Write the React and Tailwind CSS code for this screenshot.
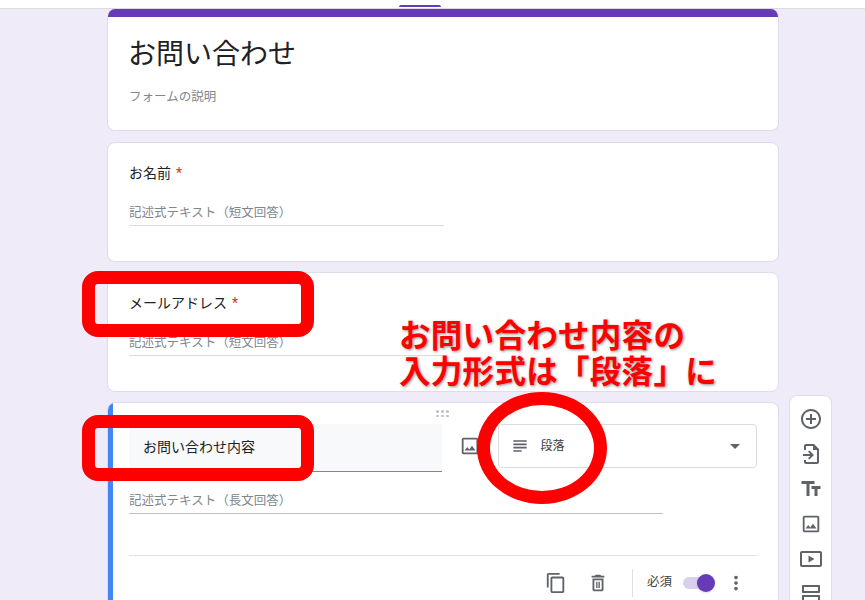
const JP = `font-['Roboto','Noto_Sans_CJK_JP',sans-serif]`;

function Ic({ d, className = "w-6 h-6", fill = "#5f6368" }) {
  return (
    <svg viewBox="0 0 24 24" className={className} fill={fill}>
      <path d={d} />
    </svg>
  );
}

const P = {
  add: "M13 7h-2v4H7v2h4v4h2v-4h4v-2h-4V7zm-1-5C6.48 2 2 6.48 2 12s4.48 10 10 10 10-4.48 10-10S17.52 2 12 2zm0 18c-4.41 0-8-3.59-8-8s3.59-8 8-8 8 3.59 8 8-3.59 8-8 8z",
  imp: "M7 2h8l5 5v13c0 1.1-.9 2-2 2H7c-1.1 0-2-.9-2-2v-2h2v2h11V8h-4V4H7v4H5V4c0-1.1.9-2 2-2zM4 12h7.2L9 9.8l1.4-1.4L15 13l-4.6 4.6L9 16.2l2.2-2.2H4v-2z",
  tt: "M2.5 4v3h5v12h3V7h5V4h-13zm19 5h-9v3h3v7h3v-7h3V9z",
  img: "M19 5v14H5V5h14m0-2H5c-1.1 0-2 .9-2 2v14c0 1.1.9 2 2 2h14c1.1 0 2-.9 2-2V5c0-1.1-.9-2-2-2zm-4.86 8.86l-3 3.87L9 13.14 6 17h12l-3.86-5.14z",
  vid: "M21 4H3c-1.1 0-2 .9-2 2v12c0 1.1.9 2 2 2h18c1.1 0 2-.9 2-2V6c0-1.1-.9-2-2-2zm0 14H3V6h18v12zM9.5 8.5v7l6-3.5-6-3.5z",
  sec: "M4 3h16c.6 0 1 .4 1 1v6c0 .6-.4 1-1 1H4c-.6 0-1-.4-1-1V4c0-.6.4-1 1-1zm1 2v4h14V5H5zM4 13h16c.6 0 1 .4 1 1v6c0 .6-.4 1-1 1H4c-.6 0-1-.4-1-1v-6c0-.6.4-1 1-1zm1 2v4h14v-4H5z",
  copy: "M16 1H4c-1.1 0-2 .9-2 2v14h2V3h12V1zm3 4H8c-1.1 0-2 .9-2 2v14c0 1.1.9 2 2 2h11c1.1 0 2-.9 2-2V7c0-1.1-.9-2-2-2zm0 16H8V7h11v14z",
  del: "M6 19c0 1.1.9 2 2 2h8c1.1 0 2-.9 2-2V7H6v12zM8 9h8v10H8V9zm7.5-5l-1-1h-5l-1 1H5v2h14V4zM10 10.5h1.5v7H10v-7zm2.5 0H14v7h-1.5v-7z",
  more: "M12 8c1.1 0 2-.9 2-2s-.9-2-2-2-2 .9-2 2 .9 2 2 2zm0 2c-1.1 0-2 .9-2 2s.9 2 2 2 2-.9 2-2-.9-2-2-2zm0 6c-1.1 0-2 .9-2 2s.9 2 2 2 2-.9 2-2-.9-2-2-2z",
  para: "M14 17H4v2h10v-2zm6-8H4v2h16V9zM4 15h16v-2H4v2zM4 5v2h16V5H4z",
};

function ShortCard({ title }) {
  return (
    <section className="h-[120px] bg-white rounded-lg border border-[#dfdbe9] pl-[21px] pt-[19px]">
      <div className="flex items-center h-[22px] text-[14px] text-[#202124]">
        {title}
        <span className="text-[#d93025] ml-[5px]">*</span>
      </div>
      <div className="mt-[9px] w-[315px] h-[33px] border-b border-[#dadce0] text-[12.5px] leading-[24px] text-[#80868b] pt-[8px]">
        記述式テキスト（短文回答）
      </div>
    </section>
  );
}

export default function App() {
  return (
    <div className={`relative w-[865px] h-[600px] overflow-hidden bg-[#f0ebf8] ${JP}`}>
      <header className="h-[9px] bg-white border-b border-[#dadce0] flex justify-center">
        <div className="w-[42px] h-[2px] mt-[5px] mr-[25px] bg-[#673ab7] rounded-t" />
      </header>

      <div className="flex items-start gap-[10px] ml-[107px]">
        <main className="w-[672px] flex flex-col gap-[10px] shrink-0">
          <section className="h-[122px] mb-[1px] bg-white rounded-lg border border-[#dfdbe9] border-t-0 overflow-hidden">
            <div className="h-[8px] bg-[#673ab7] -mx-px" />
            <h1 className="ml-[20px] mt-[13px] text-[28px] leading-[50px] text-[#202124] font-normal">お問い合わせ</h1>
            <p className="ml-[21px] mt-[5px] text-[12.5px] leading-[24px] text-[#80868b]">フォームの説明</p>
          </section>

          <ShortCard title="お名前" />
          <ShortCard title="メールアドレス" />

          <section className="relative h-[260px] bg-white rounded-lg border border-[#dfdbe9] pl-[21px] pr-[21px] overflow-hidden">
            <div className="absolute left-0 top-0 bottom-0 w-[5px] bg-[#4285f4]" />
            <div className="flex justify-center h-[21px] pt-[7px] ml-[-1px]">
              <div className="grid grid-cols-3 gap-[2px] h-[6px] w-[13px]">
                {[0, 1, 2, 3, 4, 5].map((i) => (
                  <span key={i} className="w-[3px] h-[2.5px] bg-[#bdc1c6] rounded-full" />
                ))}
              </div>
            </div>
            <div className="flex items-start">
              <div className="w-[314px] h-[48px] bg-[#f8f9fa] border-b border-[#80868b] pl-[14px] text-[14px] leading-[46px] text-[#202124]">
                お問い合わせ内容
              </div>
              <div className="w-[56px] h-[44px] flex items-center pl-[17px]">
                <Ic d={P.img} className="w-[22px] h-[22px]" />
              </div>
              <div className="w-[259px] h-[44px] rounded border border-[#dadce0] flex items-center pl-[11px] pr-[16px]">
                <Ic d={P.para} className="w-[20px] h-[20px]" />
                <span className="ml-[10px] text-[12px] text-[#3c4043]">段落</span>
                <svg viewBox="0 0 10 5" className="w-[10px] h-[5px] ml-auto" fill="#5f6368"><path d="M0 0l5 5 5-5z" /></svg>
              </div>
            </div>
            <div className="mt-[16px] w-[534px] h-[26px] border-b border-[#bdc1c6] text-[12.5px] leading-[26px] text-[#80868b]">
              記述式テキスト（長文回答）
            </div>
            <div className="mt-[41px] border-t border-[#e0e0e0] w-[628px] flex items-center justify-end h-[54px] pr-[10px]">
              <Ic d={P.copy} className="w-[22px] h-[22px]" />
              <Ic d={P.del} className="w-[22px] h-[22px] ml-[20px]" />
              <span className="w-px h-[28px] bg-[#e0e0e0] ml-[23px] mr-[14px]" />
              <span className="text-[12.5px] text-[#3c4043]">必須</span>
              <div className="relative w-[32px] h-[20px] ml-[11px] flex items-center">
                <div className="w-[28px] h-[12px] rounded-full bg-[#d9cfee]" />
                <div className="absolute right-[0px] w-[18px] h-[18px] rounded-full bg-[#673ab7] shadow" />
              </div>
              <Ic d={P.more} className="w-[22px] h-[22px] ml-[10px]" />
            </div>
          </section>
        </main>

        <aside className="w-[43px] h-[240px] mt-[386px] bg-white rounded-lg border border-[#dfdbe9] flex flex-col items-center pt-[11px] gap-[11px] shrink-0">
          <Ic d={P.add} />
          <Ic d={P.imp} />
          <Ic d={P.tt} />
          <Ic d={P.img} className="w-[22px] h-[22px] my-px" />
          <Ic d={P.vid} />
          <Ic d={P.sec} />
        </aside>
      </div>

      {/* annotations laid over the form */}
      <div className="absolute left-[82px] top-[271px] w-[232px] h-[66px] border-[13px] border-[#ff0000] rounded-[16px]" />
      <div className="absolute left-[82px] top-[415px] w-[232px] h-[66px] border-[13px] border-[#ff0000] rounded-[16px]" />
      <div className="absolute left-[477px] top-[392px] w-[130px] h-[112px] border-[13px] border-[#ff0000] rounded-[50%]" />
      <div className="absolute left-[399px] top-[315px] text-[31.5px] tracking-[0.3px] leading-[36px] font-bold text-[#ff0000] whitespace-nowrap [font-kerning:none] [text-shadow:1px_1px_3px_rgba(0,0,0,0.45)] font-['Noto_Sans_CJK_JP',sans-serif]">
        <div>お問い合わせ内容の</div>
        <div>入力形式は「段落」に</div>
      </div>
    </div>
  );
}
